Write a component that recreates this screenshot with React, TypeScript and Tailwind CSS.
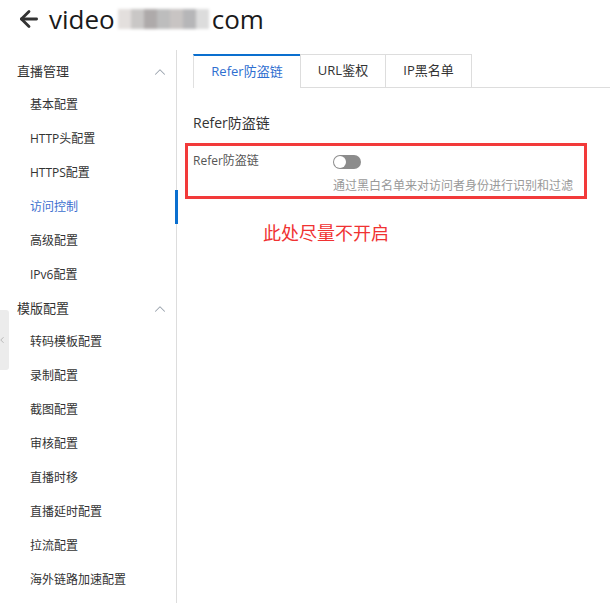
import { ArrowLeft, ChevronUp, ChevronLeft } from "lucide-react";

const groups = [
  {
    title: "直播管理",
    items: ["基本配置", "HTTP头配置", "HTTPS配置", "访问控制", "高级配置", "IPv6配置"],
  },
  {
    title: "模版配置",
    items: [
      "转码模板配置",
      "录制配置",
      "截图配置",
      "审核配置",
      "直播时移",
      "直播延时配置",
      "拉流配置",
      "海外链路加速配置",
    ],
  },
];

const blurColors = ["#e3dfdd", "#c9c7c6", "#aeaaaa", "#bdbdbd", "#c8c4c3", "#b6b6b8", "#dcdcdc"];

export default function App() {
  return (
    <div className="relative h-[603px] w-[610px] overflow-hidden bg-white font-['Open_Sans','Noto_Sans_CJK_SC',sans-serif] text-[#333]">
      {/* header */}
      <div className="flex h-[50px] items-center pb-[12px] pl-[16px]">
        <ArrowLeft size={26} strokeWidth={2.6} className="text-[#333]" />
        <div className="ml-[7px] flex items-center text-[26px] leading-none text-[#1a1a1a]">
          <span>video</span>
          <span className="mx-[3px] flex h-[20px] w-[91px] blur-[1.5px]">
            {blurColors.map((c, i) => (
              <span key={i} className="h-full flex-1" style={{ backgroundColor: c }} />
            ))}
          </span>
          <span>com</span>
        </div>
      </div>

      <div className="flex h-[553px]">
        {/* sidebar */}
        <aside className="w-[177px] shrink-0 border-r border-[#ddd] pt-[5px]">
          {groups.map((g) => (
            <div key={g.title}>
              <div className="flex h-[33px] items-center justify-between pl-[17px] pr-[7px] text-[13px]">
                <span>{g.title}</span>
                <ChevronUp size={18} strokeWidth={1.4} className="text-[#9aa3ad]" />
              </div>
              {g.items.map((item) => {
                const active = item === "访问控制";
                return (
                  <div
                    key={item}
                    className={
                      "relative flex h-[34px] items-center pl-[30px] text-[12px] " +
                      (active ? "text-[#3c6fcf]" : "text-[#333]")
                    }
                  >
                    {item}
                    {active && <span className="absolute right-[-2px] top-0 h-[34px] w-[3px] bg-[#0a6fcf]" />}
                  </div>
                );
              })}
            </div>
          ))}
        </aside>

        {/* main */}
        <main className="flex-1 pl-[16px] pt-[4px]">
          <div className="flex h-[34px]">
            <div className="flex w-[107px] items-center justify-center border-t-2 border-l border-[#0a6fcf] border-l-[#e0e0e0] text-[13px] text-[#2f6fd0]">
              Refer防盗链
            </div>
            <div className="flex w-[86px] items-center justify-center border border-[#ddd] text-[13px]">
              URL鉴权
            </div>
            <div className="flex w-[86px] items-center justify-center border border-l-0 border-[#ddd] text-[13px]">
              IP黑名单
            </div>
            <div className="flex-1 border-b border-[#ddd]" />
          </div>

          <h2 className="mt-[25px] text-[14px] leading-[20px] text-[#333]">Refer防盗链</h2>

          <div className="ml-[-8px] mt-[10px] w-[402px] border-[3px] border-[#f23a3a] pb-[2px] pl-[5px] pt-[7px]">
            <div className="flex">
              <div className="w-[140px] text-[12px] leading-[16px] text-[#555]">Refer防盗链</div>
              <div>
                <div className="relative mt-[2px] h-[14px] w-[28px] rounded-full bg-[#8c8c8c]">
                  <span className="absolute left-[1px] top-[1px] h-[12px] w-[12px] rounded-full bg-white" />
                </div>
                <div className="mt-[9px] text-[12px] leading-[16px] text-[#999]">
                  通过黑白名单来对访问者身份进行识别和过滤
                </div>
              </div>
            </div>
          </div>

          <p className="ml-[70px] mt-[22px] text-[18px] leading-[24px] text-[#f03232]">此处尽量不开启</p>
        </main>
      </div>

      {/* collapse handle */}
      <div className="absolute left-0 top-[310px] flex h-[60px] w-[9px] items-center rounded-r-[3px] bg-[#ececec]">
        <ChevronLeft size={10} strokeWidth={1.5} className="ml-[-3px] text-[#999]" />
      </div>
    </div>
  );
}
